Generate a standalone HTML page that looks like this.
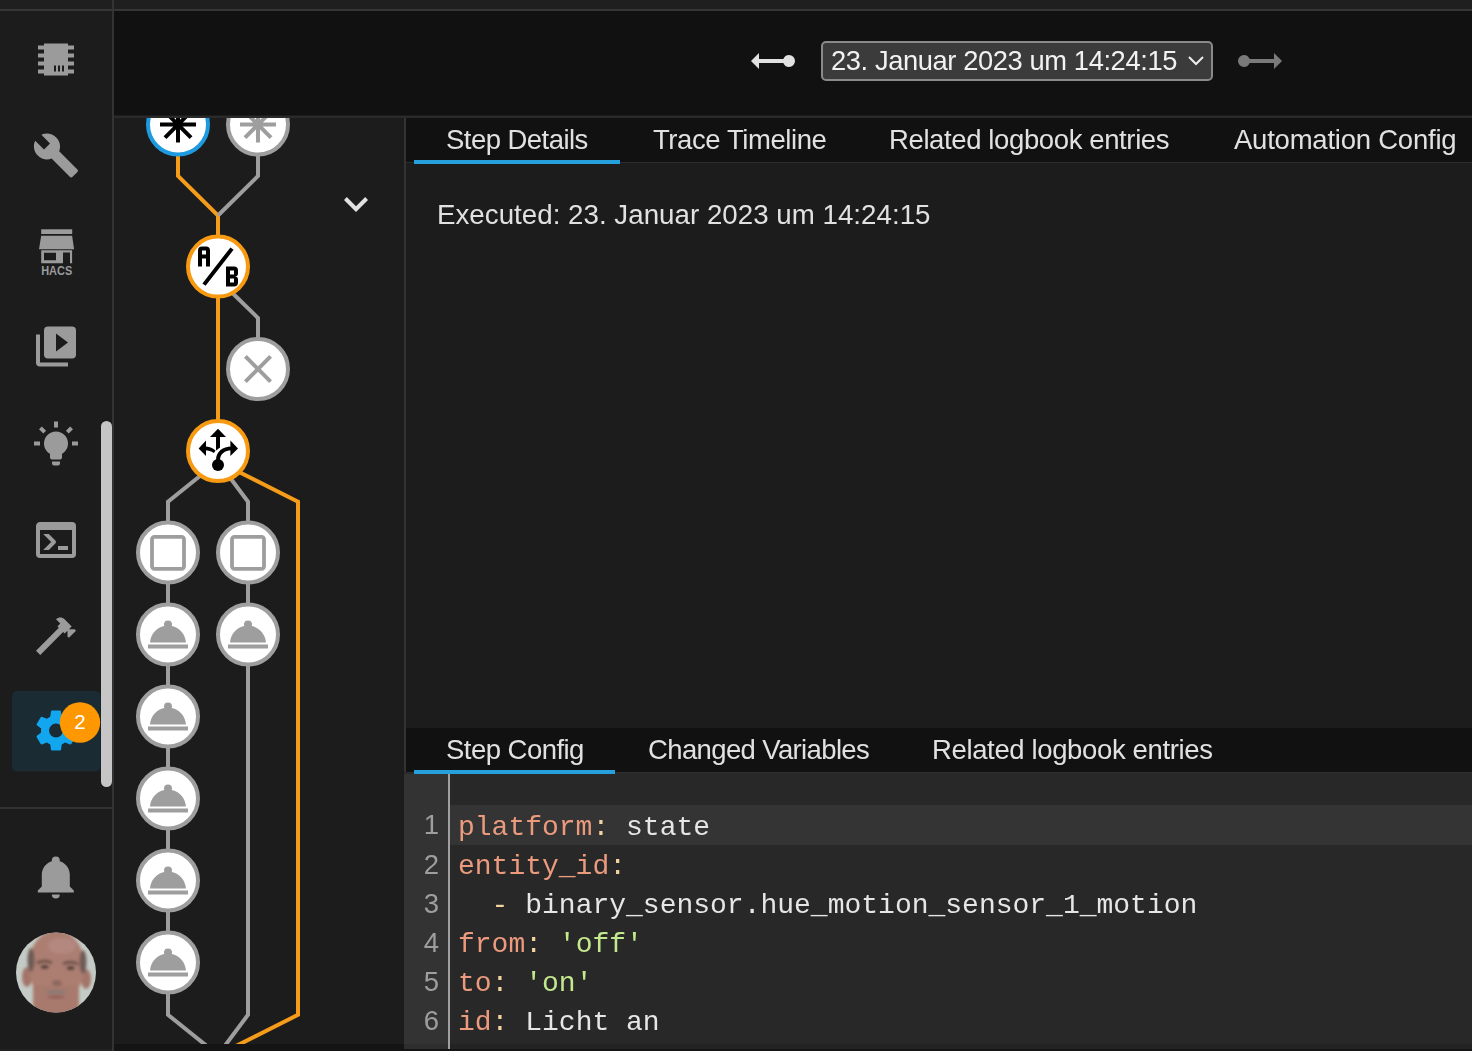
<!DOCTYPE html>
<html><head><meta charset="utf-8">
<style>
*{margin:0;padding:0;box-sizing:border-box}
html,body{width:1472px;height:1051px;overflow:hidden;background:#1c1c1c;font-family:"Liberation Sans",sans-serif}
.a{position:absolute}
.t{position:absolute;white-space:pre;line-height:1;color:#e1e1e1;will-change:transform}
.code{will-change:transform;position:absolute;white-space:pre;line-height:1;font-family:"Liberation Mono",monospace;font-size:28px;color:#e6e6e6}
.k{color:#eb9a7e}.c{color:#f3d39f}.s{color:#c3e88d}
.ln{will-change:transform;position:absolute;white-space:pre;line-height:1;font-family:"Liberation Sans",sans-serif;font-size:27.5px;color:#9e9e9e;text-align:right;width:40px}
</style></head><body>
<!-- top strip -->
<div class="a" style="left:0;top:0;width:1472px;height:9px;background:#1f1f1f"></div>
<div class="a" style="left:0;top:9px;width:1472px;height:2px;background:#363636"></div>
<!-- sidebar -->
<div class="a" style="left:0;top:11px;width:112px;height:1040px;background:#1c1c1c"></div>
<div class="a" style="left:112px;top:0;width:2px;height:1051px;background:#333"></div>
<div class="a" style="left:0;top:1049px;width:112px;height:2px;background:#222"></div>

<!-- graph area -->
<div class="a" style="left:114px;top:116px;width:290px;height:935px;background:#1c1c1c"></div>
<svg class="a" style="left:0;top:0" width="1472" height="1051" viewBox="0 0 1472 1051">
 <g fill="none" stroke-width="4" stroke-linejoin="miter">
  <path d="M178 124 V176 L218 215.5 V266" stroke="#f59c1a"/>
  <path d="M258 124 V176 L218 215.5" stroke="#9e9e9e"/>
  <path d="M218 266 V451" stroke="#f59c1a"/>
  <path d="M218 279 L258 318 V369" stroke="#9e9e9e"/>
  <path d="M218 461.5 L168 501.7 V963 V1014.8 L218 1055" stroke="#9e9e9e"/>
  <path d="M218 461.5 L248 501.7 V635 V1014.8 L218 1055" stroke="#9e9e9e"/>
  <path d="M218 461.5 L298 501.7 V1014.8 L218 1055" stroke="#f59c1a"/>
 </g>
 <g stroke-width="4" fill="#fff">
  <circle cx="178" cy="124.5" r="30" stroke="#1e9be0"/>
  <circle cx="258" cy="124.5" r="30" stroke="#9e9e9e"/>
  <circle cx="218" cy="266.6" r="30" stroke="#f79a12"/>
  <circle cx="258" cy="369" r="30" stroke="#9e9e9e"/>
  <circle cx="218" cy="451" r="30" stroke="#f79a12"/>
  <circle cx="168" cy="552.5" r="30" stroke="#9e9e9e"/>
  <circle cx="248" cy="552.5" r="30" stroke="#9e9e9e"/>
  <circle cx="168" cy="634.5" r="30" stroke="#9e9e9e"/>
  <circle cx="248" cy="634.5" r="30" stroke="#9e9e9e"/>
  <circle cx="168" cy="716.5" r="30" stroke="#9e9e9e"/>
  <circle cx="168" cy="798.5" r="30" stroke="#9e9e9e"/>
  <circle cx="168" cy="880.5" r="30" stroke="#9e9e9e"/>
  <circle cx="168" cy="962.5" r="30" stroke="#9e9e9e"/>
 </g>
 <!-- asterisks -->
 <g stroke="#000" stroke-width="4">
  <path d="M160 124.6H196M178 106.6V142.6M165 111.6L191 137.6M191 111.6L165 137.6"/>
  <circle cx="178" cy="124.6" r="4" fill="#000" stroke="none"/>
 </g>
 <g stroke="#9e9e9e" stroke-width="4">
  <path d="M240 124.6H276M258 106.6V142.6M245 111.6L271 137.6M271 111.6L245 137.6"/>
  <circle cx="258" cy="124.6" r="4" fill="#9e9e9e" stroke="none"/>
 </g>
 <!-- A/B -->
 <path transform="translate(194 242.6) scale(2)" fill="#000" fill-rule="evenodd" d="M4 2A2 2 0 0 0 2 4V12H4V8H6V12H8V4A2 2 0 0 0 6 2H4M4 4H6V6H4Z M22 15.5V14A2 2 0 0 0 20 12H16V22H20A2 2 0 0 0 22 20V18.5A1.54 1.54 0 0 0 20.5 17A1.54 1.54 0 0 0 22 15.5M20 20H18V18H20V20M20 16H18V14H20Z M5.79 21.61L4.21 20.39L18.21 2.39L19.79 3.61Z"/>
 <!-- X -->
 <path transform="translate(234 345) scale(2)" fill="#9e9e9e" d="M19,6.41L17.59,5L12,10.59L6.41,5L5,6.41L10.59,12L5,17.59L6.41,19L12,13.41L17.59,19L19,17.59L13.41,12L19,6.41Z"/>
 <!-- choose icon -->
 <g transform="translate(194 427) scale(2)" fill="#000">
  <path d="M12 0.9L16 5H13V10.2L11 11.7V5H8Z"/>
  <path d="M2.3 10.7L6 6.8V14.5Z"/>
  <path d="M5.5 9.8C7.5 9.8 9.3 10.5 10.8 11.7L9.9 13C8.6 12 7.1 11.6 5.5 11.6Z"/>
  <path d="M22 10.7L18.2 6.8V14.5Z"/>
  <path d="M13 16.5C13 13.5 15.5 11.6 18.6 11.6V9.8C14.5 9.8 11 12.3 11 16.5Z"/>
  <circle cx="12" cy="19" r="3"/>
 </g>
 <!-- stop squares -->
 <g fill="none" stroke="#9e9e9e" stroke-width="3.8">
  <rect x="152" y="536.8" width="32" height="32" rx="2.5"/>
  <rect x="232" y="536.8" width="32" height="32" rx="2.5"/>
 </g>
 <!-- room service -->
 <g fill="#9e9e9e">
  <path transform="translate(144 610.5) scale(2)" d="M2,17H22V19H2V17M13.84,7.79C13.94,7.58 14,7.3 14,7A2,2 0 0,0 12,5A2,2 0 0,0 10,7C10,7.3 10.06,7.58 10.16,7.79C6.25,8.6 3.27,11.93 3,16H21C20.72,11.93 17.75,8.6 13.84,7.79Z"/>
  <path transform="translate(224 610.5) scale(2)" d="M2,17H22V19H2V17M13.84,7.79C13.94,7.58 14,7.3 14,7A2,2 0 0,0 12,5A2,2 0 0,0 10,7C10,7.3 10.06,7.58 10.16,7.79C6.25,8.6 3.27,11.93 3,16H21C20.72,11.93 17.75,8.6 13.84,7.79Z"/>
  <path transform="translate(144 692.5) scale(2)" d="M2,17H22V19H2V17M13.84,7.79C13.94,7.58 14,7.3 14,7A2,2 0 0,0 12,5A2,2 0 0,0 10,7C10,7.3 10.06,7.58 10.16,7.79C6.25,8.6 3.27,11.93 3,16H21C20.72,11.93 17.75,8.6 13.84,7.79Z"/>
  <path transform="translate(144 774.5) scale(2)" d="M2,17H22V19H2V17M13.84,7.79C13.94,7.58 14,7.3 14,7A2,2 0 0,0 12,5A2,2 0 0,0 10,7C10,7.3 10.06,7.58 10.16,7.79C6.25,8.6 3.27,11.93 3,16H21C20.72,11.93 17.75,8.6 13.84,7.79Z"/>
  <path transform="translate(144 856.5) scale(2)" d="M2,17H22V19H2V17M13.84,7.79C13.94,7.58 14,7.3 14,7A2,2 0 0,0 12,5A2,2 0 0,0 10,7C10,7.3 10.06,7.58 10.16,7.79C6.25,8.6 3.27,11.93 3,16H21C20.72,11.93 17.75,8.6 13.84,7.79Z"/>
  <path transform="translate(144 938.5) scale(2)" d="M2,17H22V19H2V17M13.84,7.79C13.94,7.58 14,7.3 14,7A2,2 0 0,0 12,5A2,2 0 0,0 10,7C10,7.3 10.06,7.58 10.16,7.79C6.25,8.6 3.27,11.93 3,16H21C20.72,11.93 17.75,8.6 13.84,7.79Z"/>
 </g>
 <!-- chevron -->
 <path transform="translate(332 179.9) scale(2)" fill="#e1e1e1" d="M7.41,8.58L12,13.17L16.59,8.58L18,10L12,16L6,10L7.41,8.58Z"/>
</svg>
<!-- bottom strip of graph -->
<div class="a" style="left:114px;top:1044px;width:290px;height:7px;background:#141414"></div>

<!-- header -->
<div class="a" style="left:114px;top:11px;width:1358px;height:105px;background:#111"></div>
<div class="a" style="left:114px;top:115px;width:1358px;height:1px;background:#1c1c1c"></div><div class="a" style="left:114px;top:116px;width:1358px;height:2px;background:#2a2a2a"></div>
<svg class="a" style="left:748.5px;top:37px" width="48" height="48" viewBox="0 0 24 24"><path fill="#e1e1e1" d="M1,12L5,8V11H17.17C17.58,9.83 18.69,9 20,9A3,3 0 0,1 23,12A3,3 0 0,1 20,15C18.69,15 17.58,14.17 17.17,13H5V16L1,12Z"/></svg>
<svg class="a" style="left:1236.4px;top:37px" width="48" height="48" viewBox="0 0 24 24"><path fill="#7a7a7a" transform="translate(24 0) scale(-1 1)" d="M1,12L5,8V11H17.17C17.58,9.83 18.69,9 20,9A3,3 0 0,1 23,12A3,3 0 0,1 20,15C18.69,15 17.58,14.17 17.17,13H5V16L1,12Z"/></svg>
<div class="a" style="left:821px;top:40.5px;width:391.5px;height:40px;background:#3b3b3b;border:2px solid #8a8a8a;border-radius:5px"></div>
<div class="t" style="left:830.5px;top:46.8px;font-size:27.3px;letter-spacing:-0.396px;color:#f2f2f2">23. Januar 2023 um 14:24:15</div>
<svg class="a" style="left:1186px;top:51px" width="20" height="20" viewBox="0 0 20 20"><path d="M3 6L10 13L17 6" fill="none" stroke="#eee" stroke-width="2"/></svg>

<!-- divider -->
<div class="a" style="left:404px;top:118px;width:2px;height:933px;background:#333"></div>
<!-- right panel upper -->
<div class="a" style="left:406px;top:118px;width:1066px;height:45px;background:#111"></div>
<div class="a" style="left:406px;top:162px;width:1066px;height:1px;background:#2c2c2c"></div>
<div class="a" style="left:406px;top:163px;width:1066px;height:565px;background:#1c1c1c"></div>
<div class="a" style="left:414px;top:159.5px;width:206px;height:4px;background:#26a0dc"></div>
<div class="t" style="left:445.6px;top:125.9px;font-size:27.5px;letter-spacing:-0.536px">Step Details</div>
<div class="t" style="left:652.5px;top:125.9px;font-size:27.5px;letter-spacing:-0.423px">Trace Timeline</div>
<div class="t" style="left:889.2px;top:125.9px;font-size:27.5px;letter-spacing:-0.382px">Related logbook entries</div>
<div class="t" style="left:1233.7px;top:125.9px;font-size:27.5px;letter-spacing:-0.231px">Automation Config</div>
<div class="t" style="left:437.2px;top:201.2px;font-size:27.7px;letter-spacing:0.025px">Executed: 23. Januar 2023 um 14:24:15</div>

<!-- lower tabs -->
<div class="a" style="left:406px;top:728px;width:1066px;height:44px;background:#111"></div>
<div class="t" style="left:445.5px;top:735.9px;font-size:27.5px;letter-spacing:-0.53px">Step Config</div>
<div class="t" style="left:647.6px;top:735.9px;font-size:27.5px;letter-spacing:-0.631px">Changed Variables</div>
<div class="t" style="left:932.3px;top:735.9px;font-size:27.5px;letter-spacing:-0.364px">Related logbook entries</div>

<!-- code -->
<div class="a" style="left:404px;top:772px;width:1068px;height:279px;background:#282828"></div><div class="a" style="left:406px;top:772px;width:1066px;height:1px;background:#303030"></div>
<div class="a" style="left:404px;top:774px;width:44px;height:277px;background:#333"></div>
<div class="a" style="left:414px;top:770px;width:201px;height:4px;background:#26a0dc"></div>
<div class="a" style="left:450px;top:805px;width:1022px;height:40px;background:#343434"></div>
<div class="a" style="left:448px;top:774px;width:2px;height:275px;background:#a0a0a0"></div>
<div class="ln" style="left:399px;top:811.4px">1</div>
<div class="ln" style="left:399px;top:850.5px">2</div>
<div class="ln" style="left:399px;top:889.6px">3</div>
<div class="ln" style="left:399px;top:928.7px">4</div>
<div class="ln" style="left:399px;top:967.8px">5</div>
<div class="ln" style="left:399px;top:1006.9px">6</div>
<div class="code" style="left:457.8px;top:813.8px"><span class="k">platform</span><span class="c">:</span> state</div>
<div class="code" style="left:457.8px;top:852.9px"><span class="k">entity_id</span><span class="c">:</span></div>
<div class="code" style="left:457.8px;top:892.0px">  <span class="c">-</span> binary_sensor.hue_motion_sensor_1_motion</div>
<div class="code" style="left:457.8px;top:931.1px"><span class="k">from</span><span class="c">:</span> <span class="s">'off'</span></div>
<div class="code" style="left:457.8px;top:970.2px"><span class="k">to</span><span class="c">:</span> <span class="s">'on'</span></div>
<div class="code" style="left:457.8px;top:1009.3px"><span class="k">id</span><span class="c">:</span> Licht an</div>
<div class="a" style="left:450px;top:1044px;width:1022px;height:5px;background:#232323"></div>
<div class="a" style="left:404px;top:1044px;width:44px;height:5px;background:#2e2e2e"></div>
<div class="a" style="left:404px;top:1049px;width:1068px;height:2px;background:#151515"></div>

<!-- sidebar icons -->
<svg class="a" style="left:0;top:0" width="112" height="1051" viewBox="0 0 112 1051">
 <g fill="#9b9b9b">
  <path transform="translate(32 35.4) scale(2)" d="M6,4H18V5H21V7H18V9H21V11H18V13H21V15H18V17H21V19H18V20H6V19H3V17H6V15H3V13H6V11H3V9H6V7H3V5H6V4M11,15V18H12V15H11M13,15V18H14V15H13M15,15V18H16V15H15Z"/>
  <path transform="translate(32 131.4) scale(2)" d="M22.7,19L13.6,9.9C14.5,7.6 14,4.9 12.1,3C10.1,1 7.1,0.6 4.7,1.7L9,6L6,9L1.6,4.7C0.4,7.1 0.9,10.1 2.9,12.1C4.8,14 7.5,14.5 9.8,13.6L18.9,22.7C19.3,23.1 19.9,23.1 20.3,22.7L22.6,20.4C23.1,20 23.1,19.3 22.7,19Z"/>
  <!-- HACS -->
  <rect x="41.2" y="229.3" width="31" height="4.7"/>
  <path d="M41.2 235.7H72.1L74.1 249.3H39Z"/>
  <path d="M41.2 250.3H72.1V263.3H70V252.6H63V263.3H41.2ZM44 252.7V260.3H56V252.7Z" fill-rule="evenodd"/>
  <text x="41.2" y="274.7" font-family="Liberation Sans" font-weight="bold" font-size="12.6" textLength="31" lengthAdjust="spacingAndGlyphs">HACS</text>
  <path transform="translate(32 322.5) scale(2)" d="M4,6H2V20A2,2 0 0,0 4,22H18V20H4V6M22,4V16A2,2 0 0,1 20,18H8A2,2 0 0,1 6,16V4A2,2 0 0,1 8,2H20A2,2 0 0,1 22,4M12,14.5L18,10L12,5.5V14.5Z" fill-rule="evenodd"/>
  <path transform="translate(32 419.4) scale(2)" d="M12,6A6,6 0 0,1 18,12C18,14.22 16.79,16.16 15,17.2V19A1,1 0 0,1 14,20H10A1,1 0 0,1 9,19V17.2C7.21,16.16 6,14.22 6,12A6,6 0 0,1 12,6M14,21V22A1,1 0 0,1 13,23H11A1,1 0 0,1 10,22V21H14M20,11H23V13H20V11M1,11H4V13H1V11M13,1V4H11V1H13M4.92,3.5L7.05,5.64L5.63,7.05L3.5,4.93L4.92,3.5M16.95,5.63L19.07,3.5L20.5,4.93L18.36,7.05L16.95,5.63Z"/>
  <path transform="translate(32 516) scale(2)" d="M20,19V7H4V19H20M20,3A2,2 0 0,1 22,5V19A2,2 0 0,1 20,21H4A2,2 0 0,1 2,19V5C2,3.89 2.9,3 4,3H20M13,17V15H18V17H13M9.58,13L5.57,9H8.4L11.7,12.3C12.09,12.69 12.09,13.33 11.7,13.72L8.42,17H5.59L9.58,13Z"/>
  <path transform="translate(32 611.4) scale(2)" d="M2 19.63L13.43 8.2L12.72 7.5L14.14 6.07L12 3.89C13.2 2.7 15.09 2.7 16.27 3.89L19.87 7.5L18.45 8.91H21.29L22 9.62L18.45 13.21L17.74 12.5V9.62L16.27 11.04L15.56 10.33L4.13 21.76L2 19.63Z"/>
  <path transform="translate(31.8 852.6) scale(2)" d="M21,19V20H3V19L5,17V11C5,7.9 7.03,5.17 10,4.29C10,4.19 10,4.1 10,4A2,2 0 0,1 12,2A2,2 0 0,1 14,4C14,4.1 14,4.19 14,4.29C16.97,5.17 19,7.9 19,11V17L21,19M14,21A2,2 0 0,1 12,23A2,2 0 0,1 10,21"/>
 </g>
 <rect x="12" y="691" width="88.5" height="80.5" rx="5" fill="#1a2b33"/>
 <path transform="translate(32 706.6) scale(2)" fill="#12a6ee" d="M12,15.5A3.5,3.5 0 0,1 8.5,12A3.5,3.5 0 0,1 12,8.5A3.5,3.5 0 0,1 15.5,12A3.5,3.5 0 0,1 12,15.5M19.43,12.97C19.47,12.65 19.5,12.33 19.5,12C19.5,11.67 19.47,11.34 19.43,11L21.54,9.37C21.73,9.22 21.78,8.95 21.66,8.73L19.66,5.27C19.54,5.05 19.27,4.96 19.05,5.05L16.56,6.05C16.04,5.66 15.5,5.32 14.87,5.07L14.5,2.42C14.46,2.18 14.25,2 14,2H10C9.75,2 9.54,2.18 9.5,2.420L9.13,5.07C8.5,5.32 7.960,5.66 7.44,6.05L4.95,5.05C4.73,4.96 4.46,5.05 4.34,5.27L2.34,8.73C2.21,8.95 2.27,9.22 2.46,9.37L4.57,11C4.53,11.34 4.5,11.67 4.5,12C4.5,12.33 4.53,12.65 4.57,12.97L2.46,14.63C2.27,14.78 2.21,15.05 2.34,15.27L4.34,18.73C4.46,18.95 4.73,19.03 4.95,18.95L7.44,17.94C7.96,18.34 8.5,18.68 9.13,18.93L9.5,21.58C9.54,21.82 9.75,22 10,22H14C14.25,22 14.46,21.82 14.5,21.58L14.87,18.93C15.5,18.67 16.04,18.34 16.56,17.94L19.05,18.95C19.27,19.03 19.54,18.95 19.66,18.73L21.66,15.27C21.78,15.05 21.73,14.78 21.54,14.63L19.43,12.97Z"/>
 <circle cx="80" cy="722.5" r="20.2" fill="#ff9800"/>
 <text x="80" y="729.2" font-family="Liberation Sans" font-size="20.5" fill="#fff" text-anchor="middle">2</text>
 <rect x="101" y="421" width="11" height="366" rx="5.5" fill="#c6c6c6"/>
 <rect x="0" y="807" width="112" height="2" fill="#333"/>
 <defs>
  <clipPath id="avc"><circle cx="56" cy="972.6" r="40"/></clipPath>
  <filter id="bl" x="-20%" y="-20%" width="140%" height="140%"><feGaussianBlur stdDeviation="1.6"/></filter>
 </defs>
 <g clip-path="url(#avc)">
  <rect x="10" y="928" width="92" height="90" fill="#c4cbc6"/>
  <g filter="url(#bl)">
   <ellipse cx="27" cy="977" rx="5" ry="10" fill="#a27468"/>
   <ellipse cx="86" cy="979" rx="5" ry="10" fill="#a27468"/>
   <ellipse cx="56.5" cy="966" rx="28" ry="36" fill="#ac7e71"/>
   <rect x="33" y="985" width="46" height="35" fill="#a87a6d"/>
   <ellipse cx="31" cy="960" rx="3.5" ry="12" fill="#6e5a54"/>
   <ellipse cx="83" cy="962" rx="3.5" ry="12" fill="#6e5a54"/>
   <ellipse cx="62" cy="946" rx="14" ry="8" fill="#b89088" opacity="0.6"/>
   <path d="M37 963Q45 959 52 963M63 964Q70 960 78 964" stroke="#5a4440" stroke-width="2.5" fill="none"/>
   <ellipse cx="44.7" cy="967" rx="4" ry="2" fill="#4a3836"/>
   <ellipse cx="70.6" cy="968" rx="4" ry="2" fill="#4a3836"/>
   <ellipse cx="57" cy="983" rx="5" ry="3" fill="#8a665e"/>
   <ellipse cx="56" cy="992" rx="11" ry="2.3" fill="#8c7a74"/>
   <ellipse cx="56" cy="997" rx="9" ry="1.8" fill="#93625a"/>
  </g>
 </g>
</svg>
</body></html>
